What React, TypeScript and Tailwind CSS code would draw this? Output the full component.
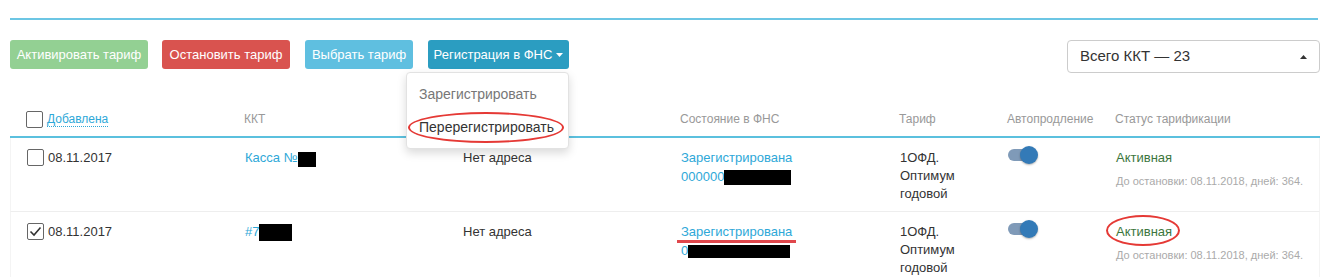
import React from 'react'

const font = { fontFamily: '"Liberation Sans", Arial, sans-serif' }

function Box({ checked }: { checked?: boolean }) {
  return (
    <span className="inline-flex w-[17px] h-[17px] shrink-0 items-center justify-center border-[1.5px] border-[#666] rounded-[2px] bg-white">
      {checked && (
        <svg width="13" height="11" viewBox="0 0 13 11">
          <path d="M1.5 5.5 L5 9 L11.5 1.5" fill="none" stroke="#333" strokeWidth="1.6" />
        </svg>
      )}
    </span>
  )
}

function Toggle() {
  return (
    <div className="relative w-[30px] h-[18px]">
      <div className="absolute left-0 top-[3px] w-[24px] h-[12px] rounded-full bg-[#7f9ab8]" />
      <div className="absolute right-0 top-0 w-[18px] h-[18px] rounded-full bg-[#337ab7] shadow-[0_1px_2px_rgba(0,0,0,0.3)]" />
    </div>
  )
}

function Row({ second }: { second?: boolean }) {
  return (
    <div className="flex border-b border-[#eee] border-x border-x-[#f4f4f4] text-[13px] leading-[18px] text-[#333] pt-[11px] pb-[8px]">
      <div className="w-[218px] pl-4 flex items-start gap-[4px]">
        <Box checked={second} />
        <span>08.11.2017</span>
      </div>
      <div className="w-[218px] pl-4 flex items-start">
        {second ? (
          <>
            <span className="text-[#2ea8d8]">#7</span>
            <span className="inline-block w-[33px] h-[17px] bg-black mt-[1px]" />
          </>
        ) : (
          <>
            <span className="text-[#2ea8d8]">Касса №</span>
            <span className="inline-block w-[18px] h-[15px] bg-black mt-[3px]" />
          </>
        )}
      </div>
      <div className="w-[218px] pl-4">Нет адреса</div>
      <div className="w-[219px] pl-4 text-[#2ea8d8]">
        <div className="relative inline-block">
          Зарегистрирована
          {second && <span className="absolute left-[-4px] right-[-4px] top-[17px] h-[3px] bg-[#e0474c]" />}
        </div>
        <div className="flex items-center mt-[1px]">
          {second ? (
            <>
              <span>0</span>
              <span className="inline-block w-[102px] h-[13px] bg-black" />
            </>
          ) : (
            <>
              <span>000000</span>
              <span className="inline-block w-[67px] h-[15px] bg-black" />
            </>
          )}
        </div>
      </div>
      <div className="w-[108px] pl-4">
        1ОФД.
        <br />
        Оптимум
        <br />
        годовой
      </div>
      <div className="w-[108px] pl-4 -mt-[3px]">
        <Toggle />
      </div>
      <div className="flex-1 pl-4">
        <div className="relative inline-block text-[#3c763d]">
          Активная
          {second && (
            <span className="absolute left-[-10px] right-[-8px] top-[-8px] bottom-[-5px] rounded-[50%] border-2 border-[#e53935]" />
          )}
        </div>
        <div className="text-[11px] text-[#aaa] mt-[5px]">До остановки: 08.11.2018, дней: 364.</div>
      </div>
    </div>
  )
}

export default function App() {
  return (
    <div className="w-[1330px] h-[277px] overflow-hidden bg-white px-[10px] pt-[18px]" style={font}>
      <div className="w-[1308px] h-[2px] bg-[#6cc6e4]" />

      <div className="flex items-start justify-between mt-[20px]">
        <div className="flex items-start text-[13px] text-white">
          <button className="w-[138px] h-[29px] rounded-[3px] bg-[#93d093]">Активировать тариф</button>
          <button className="w-[128px] h-[29px] rounded-[3px] bg-[#d9534f] ml-[14px]">Остановить тариф</button>
          <button className="w-[108px] h-[29px] rounded-[3px] bg-[#5fbfe0] ml-[15px]">Выбрать тариф</button>
          <div className="relative ml-[15px]">
            <button className="w-[141px] h-[29px] rounded-[3px] bg-[#2b9dc1] flex items-center justify-center gap-[4px]">
              Регистрация в ФНС
              <svg width="7" height="4" viewBox="0 0 7 4">
                <path d="M0 0 L7 0 L3.5 4 Z" fill="white" />
              </svg>
            </button>
            <div className="absolute z-10 right-0 top-[32px] w-[163px] h-[77px] bg-white border border-[#e2e2e2] rounded-[4px] shadow-[0_4px_10px_rgba(0,0,0,0.15)] text-[14px] pt-[11px]">
              <div className="pl-[12px] leading-[20px] text-[#777]">Зарегистрировать</div>
              <div className="relative pl-[12px] leading-[20px] text-[#333] mt-[13px]">
                Перерегистрировать
                <span className="absolute left-[1px] w-[156px] top-[-5px] h-[31px] rounded-[50%] border-2 border-[#e53935]" />
              </div>
            </div>
          </div>
        </div>
        <div className="w-[253px] h-[33px] border border-[#ccc] rounded-[4px] flex items-center justify-between pl-[12px] pr-[12px] text-[15px] text-[#333]">
          <span>Всего ККТ — 23</span>
          <svg width="7" height="4" viewBox="0 0 7 4">
            <path d="M0 4 L7 4 L3.5 0 Z" fill="#333" />
          </svg>
        </div>
      </div>

      <div className="flex items-center text-[12px] leading-[17px] text-[#999] h-[65px] pt-[30px] border-b-2 border-[#5bc0de]">
        <div className="w-[218px] pl-4 flex items-center gap-[4px]">
          <Box />
          <span className="text-[#2ea8d8] border-b border-dotted border-[#2ea8d8] leading-[14px]">Добавлена</span>
        </div>
        <div className="w-[218px] pl-4">ККТ</div>
        <div className="w-[218px] pl-4">Адрес установки</div>
        <div className="w-[219px] pl-4">Состояние в ФНС</div>
        <div className="w-[108px] pl-4">Тариф</div>
        <div className="w-[108px] pl-4">Автопродление</div>
        <div className="flex-1 pl-4">Статус тарификации</div>
      </div>

      <Row />
      <Row second />
    </div>
  )
}
